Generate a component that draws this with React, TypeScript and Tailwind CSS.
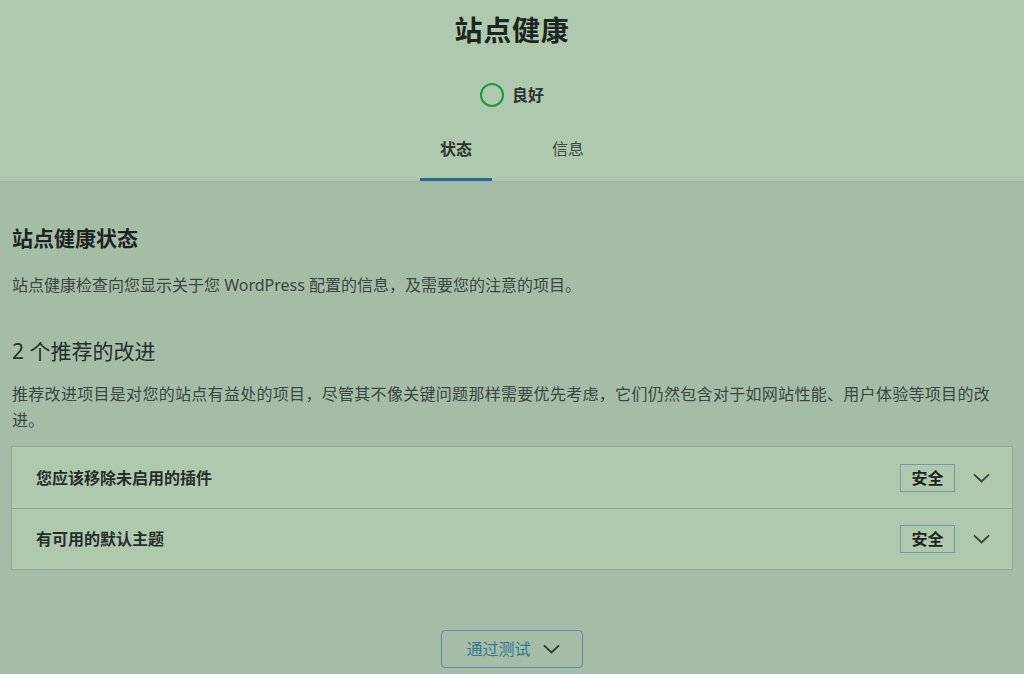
import React from 'react';

// Chevron pointing down, used on accordion rows and the passed-tests button
const Chevron: React.FC<{ className?: string }> = ({ className }) => (
  <svg viewBox="0 0 18 10" className={className} fill="none" stroke="currentColor" strokeWidth={2}>
    <path d="M1 1.2 L9 8.6 L17 1.2" />
  </svg>
);

const issues = ['您应该移除未启用的插件', '有可用的默认主题'];

const App: React.FC = () => {
  return (
    <div
      className="min-h-[674px] w-full bg-[#a5bda6] text-[#1f2b23]"
      style={{ fontFamily: '"Noto Sans", "Noto Sans CJK SC", sans-serif' }}
    >
      {/* Header: title, score and tabs */}
      <header className="flex flex-col items-center border-b border-[#9bb49c] bg-[#afc9ae]">
        <h1 className="flex h-[60px] items-center text-[28px] font-bold tracking-[0.8px] text-[#1c2620]">站点健康</h1>
        <div className="mt-[23px] flex h-[24px] items-center gap-[8px]">
          <span className="h-[24px] w-[24px] rounded-full border-2 border-[#22963f]" />
          <span className="text-[16px] font-bold text-[#2b3530]">良好</span>
        </div>
        <nav className="mt-[12px] flex gap-[40px]">
          <div className="flex h-[62px] w-[72px] items-center justify-center border-b-[3px] border-[#2a6b93] text-[16px] font-bold text-[#2b3530]">
            状态
          </div>
          <div className="flex h-[62px] w-[72px] items-center justify-center border-b-[3px] border-transparent text-[16px] text-[#3d4842]">
            信息
          </div>
        </nav>
      </header>

      {/* Status section */}
      <main className="px-[11px] pt-[41px]">
        <h2 className="pl-px text-[21px] font-bold leading-[30px] text-[#1c2620]">站点健康状态</h2>
        <p className="mt-[19px] pl-px text-[16px] leading-[26px] text-[#3a4740]">
          站点健康检查向您显示关于您 WordPress 配置的信息，及需要您的注意的项目。
        </p>

        <h3 className="mt-[38px] pl-px text-[21px] leading-[30px] text-[#25302a]">2 个推荐的改进</h3>
        <p className="mt-[15px] pr-[20px] pl-px text-[16px] leading-[26px] tracking-[0.3px] text-[#3a4740]">
          推荐改进项目是对您的站点有益处的项目，尽管其不像关键问题那样需要优先考虑，它们仍然包含对于如网站性能、用户体验等项目的改进。
        </p>

        <div className="mt-[13px] border border-[#93ab94] bg-[#afc9ae]">
          {issues.map((title, i) => (
            <div
              key={title}
              className={`flex h-[61px] items-center pr-[22px] pl-[24px] ${i > 0 ? 'border-t border-[#93ab94]' : ''}`}
            >
              <span className="flex-1 text-[16px] font-bold text-[#26302b]">{title}</span>
              <span className="flex h-[28px] w-[55px] items-center justify-center border border-[#6e9db2] text-[16px] font-bold text-[#1c2620]">
                安全
              </span>
              <Chevron className="ml-[18px] h-[10px] w-[17px] text-[#3a423e]" />
            </div>
          ))}
        </div>

        <div className="mt-[60px] flex justify-center">
          <button className="flex h-[38px] w-[142px] items-center justify-center gap-[12px] rounded-[4px] border border-[#5f8f9d] pl-[2px] text-[16px] text-[#367896]">
            通过测试
            <Chevron className="h-[10px] w-[17px] text-[#2f3733]" />
          </button>
        </div>
      </main>
    </div>
  );
};

export default App;
